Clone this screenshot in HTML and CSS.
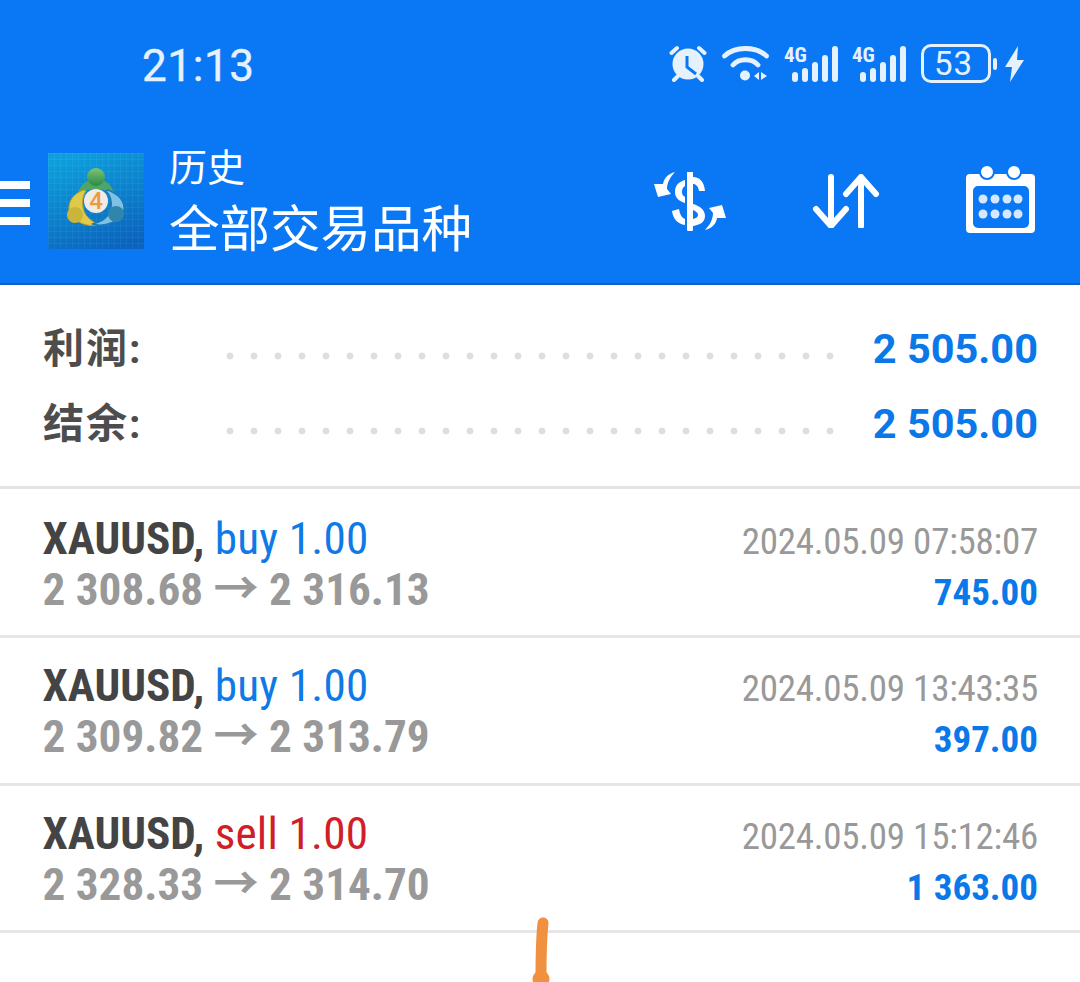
FILE: index.html
```html
<!DOCTYPE html>
<html lang="zh">
<head>
<meta charset="utf-8">
<title>历史</title>
<link rel="stylesheet" href="styles.css">
</head>
<body>
<div class="top">
  <div class="status">
    <span class="clock">21:13</span>
    <div class="status-icons">
      <svg viewBox="0 0 38 37" width="38" height="37"><path d="M2.500 8 8 3M35.500 8 30 3M9 31 5 35M29 31 33 35" stroke="#e6f1fe" stroke-width="4" stroke-linecap="round" fill="none"/><circle cx="19" cy="19" r="15.500" fill="#e6f1fe"/><path d="M18 11V22L27 29" stroke="#0a78f5" stroke-width="3" fill="none"/></svg>
      <svg class="i-wifi" viewBox="0 0 47 35" width="47" height="35"><path d="M2.500 10C13 0 34 0 44.500 10M11 19C17 12 30 12 36 19" stroke="#e6f1fe" stroke-width="4.800" stroke-linecap="round" fill="none"/><circle cx="23" cy="29.500" r="5" fill="#e6f1fe"/><path d="M37 26v8l-5-4zM39 26v8l6-4z" fill="#e6f1fe"/></svg>
      <div class="signal"><span class="tag4g">4G</span><i class="b1"></i><i class="b2"></i><i class="b3"></i><i class="b4"></i><i class="b5"></i></div>
      <div class="signal s2"><span class="tag4g">4G</span><i class="b1"></i><i class="b2"></i><i class="b3"></i><i class="b4"></i><i class="b5"></i></div>
      <div class="battery"><span class="level">53</span></div><span class="nub"></span>
      <svg class="i-bolt" viewBox="0 0 19 36" width="19" height="36"><path d="M13 0 0 21h7L5 36 19 14h-7z" fill="#e6f1fe"/></svg>
    </div>
  </div>
  <header class="bar">
    <div class="burger"><i></i><i></i><i></i></div>
    <svg class="logo" viewBox="0 0 96 96" width="96" height="96">
      <defs>
        <linearGradient id="bg" x1="0.300" y1="0" x2="0.700" y2="1"><stop offset="0" stop-color="#0d9fdc"/><stop offset="1" stop-color="#0a63bd"/></linearGradient>
        <pattern id="grid" width="6" height="6" patternUnits="userSpaceOnUse"><path d="M6 0H0V6" stroke="#ffffff" stroke-opacity=".1" fill="none"/></pattern>
        <linearGradient id="gr" x1="0" y1="0" x2="0" y2="1"><stop offset="0" stop-color="#7fc472"/><stop offset="1" stop-color="#2a8a48"/></linearGradient>
      </defs>
      <rect width="96" height="96" fill="url(#bg)"/>
      <rect width="96" height="96" fill="url(#grid)"/>
      <path d="M30 42C31 32 39 26 48 26S65 32 66 42C60 38 55 36 48 36S36 38 30 42z" fill="#4ea566"/>
      <circle cx="48" cy="24" r="9" fill="url(#gr)"/>
      <path d="M36 37C26 40 20 48 21 57C24 67 36 75 52 72C42 68 36 62 35 54C34 48 35 42 38 38z" fill="#e0ca4a" stroke="#b89c24" stroke-width="1"/>
      <circle cx="27" cy="62" r="8" fill="#c9b53a"/>
      <path d="M60 37C70 41 77 48 76 57C72 68 58 75 44 71C54 69 61 63 63 55C64 48 62 42 58 38z" fill="#7cc2e6" stroke="#1d78b4" stroke-width="1.500"/>
      <circle cx="68" cy="61" r="8" fill="#2f86ad"/>
      <circle cx="48" cy="48" r="12" fill="#f0ece4"/>
      <text x="48" y="56" class="logo-num">4</text>
    </svg>
    <div class="titles">
      <div class="sub">历史</div>
      <div class="title">全部交易品种</div>
    </div>
    <div class="actions">
      <svg viewBox="0 0 72 59" width="72" height="59"><path d="M36 1v56" stroke="#fff" stroke-width="6" stroke-linecap="round"/><path d="M39 5C46 5 50 10 51 19L45 19C44 14 42 12 39 12zM31 8C24 10 21 14 21 20C21 26 25 29 31 31L31 25C29 24 28 22 28 20C28 17 29 15 31 14zM39 32C46 34 51 38 51 44C51 50 46 53 39 54L39 47C42 46 44 45 44 43C44 41 42 39 39 38zM18 39 25 37C26 43 28 46 31 47L31 53C24 52 19 47 18 39z" fill="#fff"/><path d="M21 0C14 2 10 6 9 12L0 12 4 25 17 22 13 17C13 11 16 5 21 0z" fill="#fff"/><path d="M21 0C14 2 10 6 9 12L0 12 4 25 17 22 13 17C13 11 16 5 21 0z" fill="#fff" transform="rotate(180 36 29)"/></svg>
      <svg viewBox="0 0 68 54" width="68" height="54"><path d="M19 3V52M4 35 19 52 34 35M49 52V3M34 20 49 3 64 20" stroke="#fff" stroke-width="6" stroke-linecap="round" stroke-linejoin="round" fill="none"/></svg>
      <svg viewBox="0 0 70 70" width="70" height="70"><path d="M4 9h61a4 4 0 0 1 4 4v51a4 4 0 0 1-4 4H4a4 4 0 0 1-4-4V13a4 4 0 0 1 4-4zM12 21a5 5 0 0 0-5 5v32a5 5 0 0 0 5 5h46a5 5 0 0 0 5-5V26a5 5 0 0 0-5-5z" fill="#fff" fill-rule="evenodd"/><circle cx="21" cy="7" r="7" fill="#fff" stroke="#0a78f5" stroke-width="2"/><circle cx="48" cy="7" r="7" fill="#fff" stroke="#0a78f5" stroke-width="2"/><g fill="#d6e8fe"><circle cx="17" cy="34" r="4.500"/><circle cx="29" cy="34" r="4.500"/><circle cx="41" cy="34" r="4.500"/><circle cx="52" cy="34" r="4.500"/><circle cx="17" cy="49" r="4.500"/><circle cx="29" cy="49" r="4.500"/><circle cx="41" cy="49" r="4.500"/><circle cx="52" cy="49" r="4.500"/></g></svg>
    </div>
  </header>
</div>
<section class="summary">
  <div class="sum-row"><span class="sum-label">利润:</span><span class="dots"></span><span class="sum-value">2 505.00</span></div>
  <div class="sum-row"><span class="sum-label">结余:</span><span class="dots"></span><span class="sum-value">2 505.00</span></div>
</section>
<section class="trades">
  <div class="trade">
    <div class="line"><span class="sq sq-l"><b class="sym">XAUUSD,</b> <span class="blue">buy 1.00</span></span><span class="sq sq-r time">2024.05.09 07:58:07</span></div>
    <div class="line"><span class="sq sq-l price">2 308.68 → 2 316.13</span><span class="sq sq-r profit">745.00</span></div>
  </div>
  <div class="trade">
    <div class="line"><span class="sq sq-l"><b class="sym">XAUUSD,</b> <span class="blue">buy 1.00</span></span><span class="sq sq-r time">2024.05.09 13:43:35</span></div>
    <div class="line"><span class="sq sq-l price">2 309.82 → 2 313.79</span><span class="sq sq-r profit">397.00</span></div>
  </div>
  <div class="trade">
    <div class="line"><span class="sq sq-l"><b class="sym">XAUUSD,</b> <span class="red">sell 1.00</span></span><span class="sq sq-r time">2024.05.09 15:12:46</span></div>
    <div class="line"><span class="sq sq-l price">2 328.33 → 2 314.70</span><span class="sq sq-r profit">1 363.00</span></div>
  </div>
</section>
<svg class="mark" viewBox="0 0 24 66" width="24" height="66"><path d="M13 6C11 25 11 45 11 60" stroke="#f0913f" stroke-width="11" stroke-linecap="round" fill="none"/><circle cx="11" cy="62" r="8.500" fill="#f0913f"/></svg>
</body>
</html>
```
FILE: styles.css
```css
* { box-sizing: border-box; }
html, body { margin: 0; padding: 0; }
body { width: 1080px; height: 982px; overflow: hidden; background: #fff; font-family: Roboto, "Noto Sans CJK SC", sans-serif; position: relative; }

.top { background: #0a78f5; height: 285px; border-bottom: 2px solid #0862c8; }
.status { height: 132px; display: flex; align-items: center; justify-content: space-between; padding: 0 56px 0 142px; }
.clock { font-size: 44px; color: #e6f1fe; letter-spacing: 0.6px; -webkit-text-stroke: 0.4px #e6f1fe; }
.status-icons { display: flex; align-items: center; margin-top: -5px; }
.i-wifi { margin-left: 15px; }
.signal { position: relative; width: 54px; height: 36px; margin-left: 15px; display: flex; align-items: flex-end; justify-content: flex-end; gap: 4px; }
.signal.s2 { margin-left: 14px; }
.signal i { display: block; width: 6px; background: #e6f1fe; border-radius: 3px; }
.signal .b1 { height: 10px; } .signal .b2 { height: 14px; } .signal .b3 { height: 20px; } .signal .b4 { height: 27px; } .signal .b5 { height: 36px; }
.tag4g { position: absolute; left: 0; top: 0; font-size: 21px; font-weight: 700; font-stretch: 75%; color: #e6f1fe; line-height: 18px; }
.battery { width: 70px; height: 39px; border: 3px solid #e6f1fe; border-radius: 10px; margin-left: 15px; display: flex; align-items: center; justify-content: center; padding-right: 5px; }
.level { font-size: 33px; color: #e6f1fe; line-height: 1; letter-spacing: 1px; }
.nub { width: 4px; height: 12px; background: #e6f1fe; border-radius: 2px; margin-left: 2px; }
.i-bolt { margin-left: 8px; }

.bar { height: 151px; display: flex; align-items: flex-start; padding-top: 21px; position: relative; }
.burger { width: 30px; margin-top: 28px; display: flex; flex-direction: column; gap: 10px; }
.burger i { display: block; height: 8px; background: #fff; }
.logo { margin-left: 18px; }
.titles { margin-left: 25px; color: #fff; margin-top: -7px; }
.sub { font-size: 38px; line-height: 44px; }
.title { font-size: 50.500px; line-height: 62px; margin-top: 9px; }
.actions { margin-left: auto; }
.actions svg { position: absolute; }
.actions svg:nth-child(1) { left: 654px; top: 40px; }
.actions svg:nth-child(2) { left: 812px; top: 42px; }
.actions svg:nth-child(3) { left: 966px; top: 33px; }

.summary { height: 204px; border-bottom: 3px solid #e4e4e4; padding: 26px 42px 0 43px; }
.sum-row { height: 75px; display: flex; align-items: center; }
.sum-label { flex: none; width: 175px; font-size: 41px; font-weight: 700; color: #4d4d4d; letter-spacing: 2px; margin-top: -8px; }
.dots { flex: none; width: 624px; height: 8px; background-image: radial-gradient(circle at 12px 4px, #dedede 3.200px, transparent 3.800px); background-size: 24px 8px; background-repeat: repeat-x; margin-top: 14px; }
.sum-value { margin-left: auto; font-size: 41.500px; font-weight: 700; color: #0a78e8; white-space: nowrap; }

.trade { height: 148px; border-bottom: 3px solid #e6e6e6; padding: 23px 42px 0 42.500px; }
.trade:first-child { padding-top: 25px; height: 149px; }
.trade:last-child { height: 147px; }
.line { display: flex; justify-content: space-between; align-items: baseline; height: 50.500px; }
.sq { display: inline-block; white-space: nowrap; font-stretch: 75%; line-height: 50px; }
.sq-l { font-size: 45.200px; color: #0a78e8; }
.sq-r { font-size: 37px; }
.sym { font-weight: 700; color: #444; }
.blue { color: #0f7ae5; letter-spacing: 0.200px; }
.red { color: #cf2027; letter-spacing: 0.200px; }
.time { color: #999; letter-spacing: -0.250px; }
.price { font-weight: 700; color: #999; }
.profit { font-weight: 700; color: #0a78e8; }

.mark { position: absolute; left: 530px; top: 917px; }
.logo-num { font-size: 24px; font-weight: 500; fill: #ee9a3c; text-anchor: middle; }
```
